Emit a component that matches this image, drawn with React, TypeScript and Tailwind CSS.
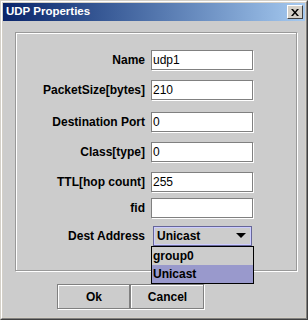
const font = "font-['Liberation_Sans',Arial,sans-serif]";

const rows: { label: string; value?: string; mt: string }[] = [
  { label: 'Name', value: 'udp1', mt: 'mt-[17px]' },
  { label: 'PacketSize[bytes]', value: '210', mt: 'mt-[10px]' },
  { label: 'Destination Port', value: '0', mt: 'mt-[12px]' },
  { label: 'Class[type]', value: '0', mt: 'mt-[10px]' },
  { label: 'TTL[hop count]', value: '255', mt: 'mt-[10px]' },
  { label: 'fid', value: '', mt: 'mt-[6px]' },
];

function TextField({ value }: { value: string }) {
  return (
    <div className="w-[102px] h-[20px] bg-white border border-[#808080] shadow-[1px_1px_0_#ffffff] flex items-center pl-[1px] text-[12px] text-black leading-none">
      {value}
    </div>
  );
}

function Button({ children }: { children: string }) {
  return (
    <div className="h-[25px] border border-[#808080] shadow-[1px_1px_0_#ffffff] flex items-center justify-center text-[12px] font-bold text-black bg-[#cccccc]">
      <div className="w-full h-full border-t border-l border-white flex items-center justify-center">{children}</div>
    </div>
  );
}

export default function App() {
  return (
    <div className={`w-[308px] h-[320px] ${font} border border-t-[#d4d0c8] border-l-[#d4d0c8] border-r-[#404040] border-b-[#404040]`}>
      <div className="w-full h-full border border-t-white border-l-white border-r-[#808080] border-b-[#808080] bg-[#d4d0c8] p-px flex flex-col">
        {/* title bar */}
        <div className="h-[18px] bg-gradient-to-r from-[#0a246a] to-[#a6caf0] flex items-center pl-[3px] pr-[2px]">
          <span className="flex-1 text-white font-bold text-[11.5px] leading-none">UDP Properties</span>
          <div className="w-[16px] h-[14px] bg-[#d4d0c8] border border-t-white border-l-white border-r-[#404040] border-b-[#404040] flex items-center justify-center">
            <svg width="8" height="7" viewBox="0 0 8 7">
              <path d="M0 0h2l2 2.5L6 0h2L5 3.5 8 7H6L4 4.5 2 7H0l3-3.5z" fill="#000" />
            </svg>
          </div>
        </div>
        {/* body */}
        <div className="flex-1 bg-[#cccccc] pl-[12px] pr-[8px] pt-[11px] flex flex-col">
          <div className="h-[239px] border border-[#999999] shadow-[inset_1px_1px_0_#ffffff,1px_1px_0_#ffffff] flex flex-col">
            {rows.map((r) => (
              <div key={r.label} className={`${r.mt} h-[20px] flex items-center`}>
                <div className="w-[129px] text-right text-[12px] font-bold text-black leading-none">{r.label}</div>
                <div className="ml-[6px]">
                  <TextField value={r.value ?? ''} />
                </div>
              </div>
            ))}
            <div className="mt-[8px] h-[20px] flex items-center">
              <div className="w-[129px] text-right text-[12px] font-bold text-black leading-none">Dest Address</div>
              <div className="ml-[8px] relative">
                <div className="w-[99px] h-[20px] border border-[#666699] shadow-[inset_1px_1px_0_#ccccff,inset_-1px_-1px_0_#ccccff] flex items-center pl-[3px] pr-[5px] bg-[#cccccc]">
                  <span className="flex-1 text-[12px] font-bold text-black leading-none">Unicast</span>
                  <svg width="10" height="6" viewBox="0 0 10 6">
                    <path d="M0 0h10L5 5z" fill="#000" />
                  </svg>
                </div>
                <div className="absolute left-[-2px] top-[20px] w-[103px] border border-black bg-[#cccccc] flex flex-col z-10">
                  <div className="h-[18px] flex items-center pl-px text-[12px] font-bold text-black leading-none">group0</div>
                  <div className="h-[18px] flex items-center pl-px text-[12px] font-bold text-black leading-none bg-[#9999cc]">Unicast</div>
                </div>
              </div>
            </div>
          </div>
          <div className="mt-[13px] ml-[42px] flex">
            <div className="w-[73px]">
              <Button>Ok</Button>
            </div>
            <div className="w-[74px]">
              <Button>Cancel</Button>
            </div>
          </div>
        </div>
      </div>
    </div>
  );
}
